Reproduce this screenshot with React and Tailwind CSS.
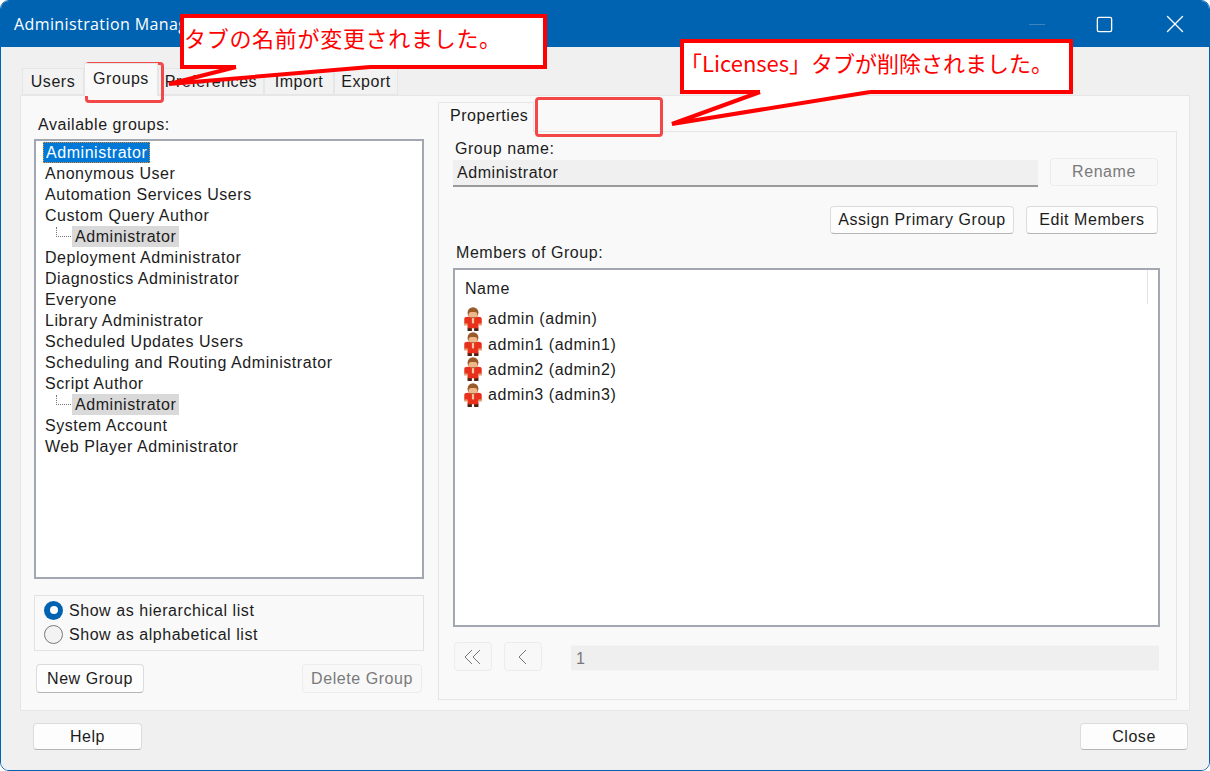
import { Square, X } from 'lucide-react';

const groups = [
  { name: 'Administrator', selected: true },
  { name: 'Anonymous User' },
  { name: 'Automation Services Users' },
  { name: 'Custom Query Author' },
  { name: 'Administrator', child: true },
  { name: 'Deployment Administrator' },
  { name: 'Diagnostics Administrator' },
  { name: 'Everyone' },
  { name: 'Library Administrator' },
  { name: 'Scheduled Updates Users' },
  { name: 'Scheduling and Routing Administrator' },
  { name: 'Script Author' },
  { name: 'Administrator', child: true },
  { name: 'System Account' },
  { name: 'Web Player Administrator' },
];

const members = ['admin (admin)', 'admin1 (admin1)', 'admin2 (admin2)', 'admin3 (admin3)'];

const PersonIcon = () => (
  <svg width="20" height="24" viewBox="0 0 18 22" className="-ml-[2px] shrink-0">
    <rect x="4" y="19" width="4" height="3" fill="#4a2412" />
    <rect x="10" y="19" width="4" height="3" fill="#4a2412" />
    <path d="M1 11 Q1 9 4 9 H14 Q17 9 17 11 V16 H14 V19.5 H4 V16 H1 Z" fill="#e8301c" />
    <rect x="1" y="15" width="3" height="2" fill="#e0a070" />
    <rect x="14" y="15" width="3" height="2" fill="#e0a070" />
    <rect x="8" y="10" width="2" height="5" fill="#f7c9a0" />
    <circle cx="9" cy="5.2" r="5" fill="#9a5a2a" />
    <rect x="5" y="4.5" width="8" height="5" rx="2.4" fill="#eeb88a" />
  </svg>
);

const Btn = ({ className, disabled, children }) => (
  <div
    className={`flex items-center justify-center rounded-[4px] border ${
      disabled
        ? 'border-[#ececec] bg-[#f8f8f8] text-[#7a7a7a]'
        : 'border-[#dcdcdc] border-b-[#b4b4b4] bg-[#fdfdfd] text-[#1c1c1c]'
    } ${className}`}
  >
    {children}
  </div>
);

const Radio = ({ checked, label }) => (
  <div className="flex h-6 items-center gap-[6px]">
    {checked ? (
      <div className="flex size-[19px] items-center justify-center rounded-full bg-[#0063b1]">
        <div className="size-2 rounded-full bg-white" />
      </div>
    ) : (
      <div className="size-[19px] rounded-full border border-[#7a7a7a] bg-[#f3f3f3]" />
    )}
    <span>{label}</span>
  </div>
);

const Tab = ({ active, className, children }) => (
  <div
    className={`flex items-center justify-center border border-[#e6e6e6] ${
      active ? 'z-10 -mb-px h-[33px] border-b-0 bg-[#f9f9f9] pb-1' : 'h-[27px] bg-[#f2f2f2]'
    } ${className}`}
  >
    {children}
  </div>
);

const App = () => (
  <div className="relative h-[771px] w-[1210px] overflow-hidden bg-white font-['Liberation_Sans',sans-serif] text-[16px] leading-[21px] tracking-[0.55px] text-[#1c1c1c]">
    <div className="flex h-full flex-col overflow-hidden rounded-[9px] border border-[#0063b1]">
      {/* Title bar */}
      <div className="flex h-[46px] shrink-0 items-center bg-[#0063b1] pl-[13px] text-white">
        <span className="font-['Open_Sans',sans-serif] text-[16px] tracking-[0.4px]">Administration Manager</span>
        <div className="ml-auto flex items-center">
          <div className="mr-[50px] h-px w-4 bg-[#3f84bf]" />
          <Square className="mr-[46px] size-[19px] text-white" strokeWidth={1.7} />
          <X className="mr-[19px] size-[30px] text-white" strokeWidth={1.1} />
        </div>
      </div>

      {/* Dialog body */}
      <div className="flex flex-1 flex-col bg-[#f0f0f0] px-[19px] pt-[21px]">
        <div className="flex h-[27px] items-end pl-[2px]">
          <Tab className="w-[62px]">Users</Tab>
          <Tab active className="w-[74px]">Groups</Tab>
          <Tab className="w-[106px]">Preferences</Tab>
          <Tab className="w-[70px]">Import</Tab>
          <Tab className="w-[64px]">Export</Tab>
        </div>

        <div className="flex h-[616px] gap-[14px] border border-[#e6e6e6] bg-[#f9f9f9] pl-[13px] pt-[6px]">
          {/* Left column */}
          <div className="flex w-[390px] flex-col">
            <div className="h-[37px] pl-[4px] pt-[12px]">Available groups:</div>
            <div className="h-[440px] border-2 border-[#a3a7b2] bg-white pl-[7px] pt-[1px]">
              {groups.map((g, i) => (
                <div key={i} className="flex h-[21px] items-center">
                  {g.child ? (
                    <>
                      <div className="mb-[10px] ml-[13px] mr-px h-[10px] w-[15px] border-b border-l border-dotted border-[#777]" />
                      <span className="flex h-[21px] items-center bg-[#d9d9d9] px-[3px]">{g.name}</span>
                    </>
                  ) : g.selected ? (
                    <span className="flex h-[21px] items-center border border-dotted border-[#e58a2c] bg-[#0078d7] px-[2px] text-white">
                      {g.name}
                    </span>
                  ) : (
                    <span className="pl-[2px]">{g.name}</span>
                  )}
                </div>
              ))}
            </div>
            <div className="mt-4 flex h-[56px] flex-col justify-center border border-[#e2e2e2] pb-[2px] pl-[9px]">
              <Radio checked label="Show as hierarchical list" />
              <Radio label="Show as alphabetical list" />
            </div>
            <div className="mt-[13px] flex justify-between px-[2px]">
              <Btn className="h-[29px] w-[108px]">New Group</Btn>
              <Btn disabled className="h-[29px] w-[120px]">Delete Group</Btn>
            </div>
          </div>

          {/* Right column */}
          <div className="flex w-[739px] flex-col">
            <div className="flex h-[29px]">
              <div className="z-10 -mb-px flex w-[96px] items-start border border-b-0 border-[#e6e6e6] bg-[#f9f9f9] pl-[11px] pt-[2px]">
                Properties
              </div>
            </div>
            <div className="flex h-[569px] flex-col border border-[#e6e6e6] bg-[#f9f9f9] pl-[14px] pr-[16px]">
              <div className="pl-[2px] pt-[6px]">Group name:</div>
              <div className="flex h-[33px] items-start gap-3">
                <div className="mt-px flex h-[27px] w-[585px] items-center border-b-2 border-[#9a9a9a] bg-[#f0f0f0] pl-[4px]">
                  Administrator
                </div>
                <Btn disabled className="-mt-px h-[28px] w-[108px] pb-px">Rename</Btn>
              </div>
              <div className="mt-[14px] flex justify-end gap-3 pr-[2px]">
                <Btn className="h-[28px] w-[184px] pb-px">Assign Primary Group</Btn>
                <Btn className="h-[28px] w-[132px] pb-px">Edit Members</Btn>
              </div>
              <div className="pl-[3px] pt-[8px]">Members of Group:</div>
              <div className="mt-[5px] h-[359px] border-2 border-[#a3a7b2] bg-white pl-[10px]">
                <div className="flex h-[36px] items-end justify-between pb-[7px]">
                  <span>Name</span>
                  <div className="-mb-[5px] mr-[10px] h-[34px] w-px bg-[#e4e4e4]" />
                </div>
                <div>
                  {members.map((m) => (
                    <div key={m} className="flex h-[25.4px] items-center gap-[5px]">
                      <PersonIcon />
                      <span>{m}</span>
                    </div>
                  ))}
                </div>
              </div>
              <div className="ml-px mt-[15px] flex items-start">
                <Btn disabled className="h-[29px] w-[38px] text-[#777]">
                  <svg width="20" height="16" viewBox="0 0 20 16" fill="none" stroke="#777" strokeWidth="1">
                    <path d="M9 1 2 8l7 7M17 1l-7 7 7 7" />
                  </svg>
                </Btn>
                <Btn disabled className="ml-[12px] h-[29px] w-[38px]">
                  <svg width="10" height="16" viewBox="0 0 10 16" fill="none" stroke="#777" strokeWidth="1">
                    <path d="M8 1 1 8l7 7" />
                  </svg>
                </Btn>
                <div className="ml-[29px] mt-[3px] flex h-[26px] w-[588px] items-center border-y border-[#f5f5f5] bg-[#efefef] pl-[5px] text-[#777]">
                  1
                </div>
              </div>
            </div>
          </div>
        </div>

        <div className="mt-[12px] flex justify-between pl-[13px] pr-[2px]">
          <Btn className="h-[27px] w-[109px]">Help</Btn>
          <Btn className="h-[27px] w-[108px]">Close</Btn>
        </div>
      </div>
    </div>

    {/* Annotations drawn over the dialog */}
    <div className="absolute left-[85px] top-[62px] h-[41px] w-[79px] rounded-[4px] border-[3px] border-[#f44848]" />
    <div className="absolute left-[535px] top-[97px] h-[40px] w-[128px] rounded-[4px] border-[3px] border-[#f44848]" />

    <div className="absolute left-[180px] top-[14px] flex h-[55px] w-[367px] items-start border-4 border-[#f00] bg-white pt-[3px] font-['Noto_Sans_CJK_JP',sans-serif] text-[22px] leading-[32px] tracking-[0.7px] text-[#f00]">
      タブの名前が変更されました。
    </div>
    <div className="absolute left-[680px] top-[39px] flex h-[55px] w-[393px] items-start border-4 border-[#f00] bg-white pt-[3px] font-['Noto_Sans_CJK_JP',sans-serif] text-[22px] leading-[32px] tracking-normal text-[#f00]">
      <span className="-ml-1">「Licenses」タブが削除されました。</span>
    </div>

    {/* Callout tails join the boxes, so they sit on top of the bottom border */}
    <svg className="absolute left-0 top-0" width="1210" height="140" fill="#fff" stroke="#f00" strokeWidth="4">
      <rect x="236" y="63" width="134" height="6" stroke="none" />
      <path d="M236 67 169 84 370 67" />
      <rect x="760" y="88" width="110" height="6" stroke="none" />
      <path d="M760 92 672 124 870 92" />
    </svg>
  </div>
);

export default App;
